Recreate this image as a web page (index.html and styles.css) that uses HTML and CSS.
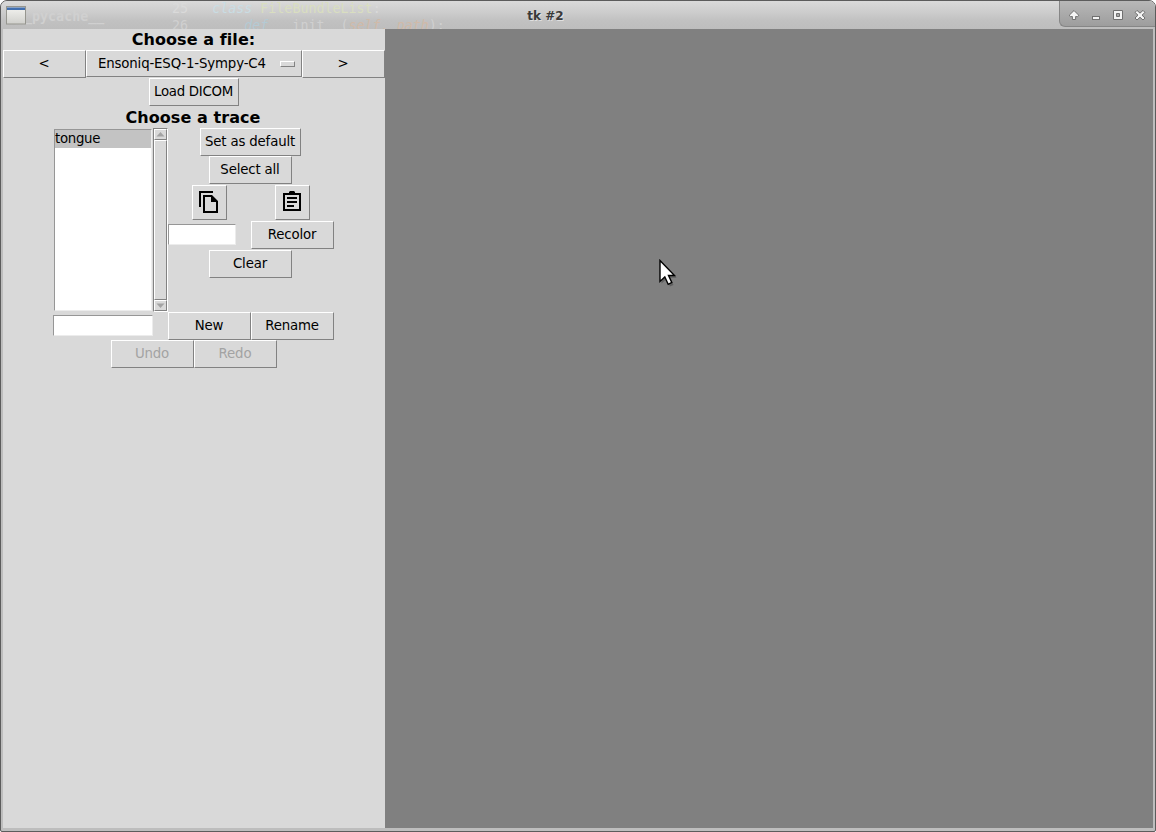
FILE: index.html
```html
<!DOCTYPE html>
<html lang="en">
<head>
<meta charset="utf-8">
<title>tk #2</title>
<link rel="stylesheet" href="styles.css">
</head>
<body>
<div class="window">
  <header class="titlebar">
    <div class="ghost" aria-hidden="true">
      <span class="ghost-tab">__pycache__</span>
      <div class="ghost-code">
        <div class="line">25   <i class="kw">class</i> <span class="nm">FileBundleList</span>:</div>
        <div class="line">26       <i class="kw">def</i> __init__(<i class="arg">self, path</i>):</div>
      </div>
    </div>
    <svg class="app-icon" width="20" height="19" viewBox="0 0 20 19">
      <defs><linearGradient id="app" x2="0" y2="1"><stop offset="0" stop-color="#f4f4f1"/><stop offset="1" stop-color="#d0d0cc"/></linearGradient></defs>
      <rect x=".5" y=".5" width="19" height="17.5" fill="url(#app)" stroke="#96968f"/>
      <rect x="1" y="2" width="18" height="2" fill="#416fb0"/>
      <rect x="1" y="1" width="18" height="1" fill="#8ba3c4"/>
    </svg>
    <span class="title">tk #2</span>
    <div class="controls">
      <svg width="96" height="26" viewBox="0 0 96 26">
        <g stroke="#707070" stroke-width="1" fill="#f4f4f4">
          <path d="M15 9.500L19.700 14.200L18.600 15.700L16.600 15.500V18.500H13.400V15.500L11.400 15.700L10.300 14.200Z"/>
          <rect x="33.500" y="15.500" width="7" height="3"/>
          <path fill-rule="evenodd" d="M54.500 9.500H63.500V18.500H54.500ZM57.500 12.500V15.500H60.500V12.500Z"/>
          <path d="M76 11.400L78 9.400L81 12.200L84 9.400L86 11.400L83 14.200L86 17L84 19L81 16.200L78 19L76 17L79 14.200Z"/>
        </g>
        <rect x="58" y="13" width="2" height="2" fill="#aaa"/>
      </svg>
    </div>
  </header>
  <main class="content">
    <section class="panel">
      <h1 class="heading">Choose a file:</h1>
      <div class="row">
        <button class="btn">&lt;</button>
        <button class="btn menu"><span class="menu-text">Ensoniq-ESQ-1-Sympy-C4</span><span class="indicator"></span></button>
        <button class="btn">&gt;</button>
      </div>
      <button class="btn load">Load DICOM</button>
      <h2 class="heading trace">Choose a trace</h2>
      <div class="traces">
        <div class="list-side">
          <div class="listbox"><div class="item">tongue</div></div>
          <div class="scrollbar">
            <div class="arrow"><svg width="9" height="5"><path d="M4.500 0L8.500 4.500H.5Z" fill="#a3a3a3"/></svg></div>
            <div class="slider"></div>
            <div class="arrow"><svg width="9" height="5"><path d="M.5 .5H8.500L4.500 5Z" fill="#a3a3a3"/></svg></div>
          </div>
        </div>
        <div class="tools">
          <button class="btn wide">Set as default</button>
          <button class="btn middle">Select all</button>
          <div class="icons">
            <button class="btn icon"><svg width="24" height="24" viewBox="0 0 24 24"><path d="M16 1H2v16h2V3h12V1zm-1 4l6 6v12H6V5h9zm-1 7V7H8v14h11v-9h-5z"/></svg></button>
            <button class="btn icon"><svg width="24" height="24" viewBox="0 0 24 24"><path d="M7 15h7v2H7zm0-4h10v2H7zm0-4h10v2H7zM3 3h6V2l1-1h4l1 1v1h6v18H3V3zm2 2v14h14V5H5z"/></svg></button>
          </div>
          <div class="color-row"><input class="entry color" aria-label="Color"><button class="btn">Recolor</button></div>
          <button class="btn middle clear">Clear</button>
        </div>
      </div>
      <div class="row name-row">
        <input class="entry name" aria-label="Trace name">
        <button class="btn">New</button>
        <button class="btn">Rename</button>
      </div>
      <div class="row history">
        <button class="btn" disabled>Undo</button>
        <button class="btn" disabled>Redo</button>
      </div>
    </section>
    <section class="canvas"></section>
  </main>
  <svg class="cursor" width="22" height="30" viewBox="0 0 22 30">
    <path d="M2 2V23L7 18.500L10.500 26L14 24.400L10.700 17.200H17.200Z" fill="#000" opacity=".25" transform="translate(1.500 1.500)"/>
    <path d="M2 1.500V22.500L6.800 18L10.200 25.300L13.800 23.500L10.500 16.500H16.500Z" fill="#fff" stroke="#000" stroke-width="1.400"/>
  </svg>
</div>
</body>
</html>
```
FILE: styles.css
```css
* { box-sizing: border-box; }
body { margin: 0; background: #fff; font: 13.333px/16px "DejaVu Sans", sans-serif; letter-spacing: -.16px; color: #000; }
.window {
  position: relative; width: 1156px; height: 832px;
  display: flex; flex-direction: column;
  padding: 0 2px 3px; background: #bdbdbd;
  border: 1px solid #5c5c5c; border-radius: 7px 7px 2px 2px; overflow: hidden;
}
.titlebar {
  position: relative; flex: none; height: 28px; margin: 0 -2px;
  display: flex; align-items: flex-start;
  background: linear-gradient(#dadada 0, #cbcbcb 45%, #c1c1c1 70%, #bdbdbd);
}
.ghost { position: absolute; inset: 0; overflow: hidden; font: 13.333px/16px "DejaVu Sans Mono", monospace; letter-spacing: 0; color: #d0d0d0; }
.ghost-tab { position: absolute; left: 15px; top: 8px; font-weight: bold; }
.ghost-code { position: absolute; left: 171px; top: 0; }
.line { white-space: pre; height: 17px; }
.line:first-child { color: #dadada; }
.line:first-child .kw { color: #c9dde4; }
.kw { color: #b4cad4; }
.nm { color: #d9dec0; }
.arg { color: #d0baa8; }
.app-icon { position: relative; margin: 5px 0 0 5px; }
.title {
  flex: 1; position: relative; text-align: center; margin-left: 6px; letter-spacing: 0;
  font: bold 12px/30px "DejaVu Sans", sans-serif; color: #3a3a3a; text-shadow: 1px 1px 0 #e0e0e0;
}
.controls {
  position: relative; width: 96px; height: 26px;
  background: linear-gradient(#b8b8b8, #9d9d9d);
  border: solid #868686; border-width: 0 0 1px 1px; border-radius: 0 0 0 6px;
}
.controls svg { display: block; margin-left: -1px; }
.content { flex: 1; display: flex; }
.panel { width: 382px; background: #d9d9d9; display: flex; flex-direction: column; }
.canvas { flex: 1; background: #808080; }
.heading { margin: 0; height: 21px; padding-right: 1px; font: bold 16px/21px "DejaVu Sans", sans-serif; letter-spacing: .07px; text-align: center; }
.trace { height: 22px; line-height: 23px; padding-right: 2px; }
.row { display: flex; }
.btn {
  width: 83px; height: 28px; margin: 0; padding: 0 1px 1px 0; flex: none;
  font: inherit; letter-spacing: inherit; color: #000; background: #d9d9d9;
  border: 1px solid; border-color: #fff #828282 #828282 #fff; border-radius: 0;
  display: flex; align-items: center; justify-content: center; white-space: nowrap;
}
.btn:disabled { color: #a3a3a3; }
.menu { width: 216px; height: 27px; justify-content: space-between; padding: 0 6px 0 11px; }
.indicator { width: 15px; height: 6px; border: 1px solid; border-color: #fff #828282 #828282 #fff; }
.load { width: 90px; margin-left: 146px; letter-spacing: -.28px; }
.traces { display: flex; height: 184px; padding-left: 51px; }
.list-side { display: flex; width: 114px; }
.listbox { width: 98px; height: 182px; margin: 1px 1px 0 0; background: #fff; border: 1px solid; border-color: #969696 #ececec #ececec #969696; }
.item { height: 18px; line-height: 17px; letter-spacing: -.3px; background: #c3c3c3; }
.scrollbar { width: 15px; height: 184px; display: flex; flex-direction: column; border: 1px solid; border-color: #828282 #fff #fff #828282; }
.arrow { height: 11px; display: flex; align-items: center; justify-content: center; border: 1px solid; border-color: #fff #828282 #828282 #fff; }
.slider { flex: 1; border: 1px solid; border-color: #fff #828282 #828282 #fff; }
.tools { width: 166px; display: flex; flex-direction: column; align-items: center; }
.wide { width: 101px; margin-left: -1px; }
.middle { margin-left: -1px; }
.icons { align-self: stretch; display: flex; justify-content: space-between; margin: 1px 24px; }
.icon { width: 35px; height: 35px; padding: 0 2px 2px 0; }
.color-row { align-self: stretch; display: flex; justify-content: space-between; height: 28px; }
.clear { margin-top: 1px; }
.entry { height: 21px; margin: 3px 0 0; padding: 0; background: #fff; border: 1px solid; border-color: #969696 #ececec #ececec #969696; border-radius: 0; font: inherit; }
.color { width: 68px; }
.name-row { padding-left: 50px; }
.name { width: 100px; margin-right: 15px; }
.history { padding-left: 108px; }
.cursor { position: absolute; left: 657px; top: 258px; }
```
